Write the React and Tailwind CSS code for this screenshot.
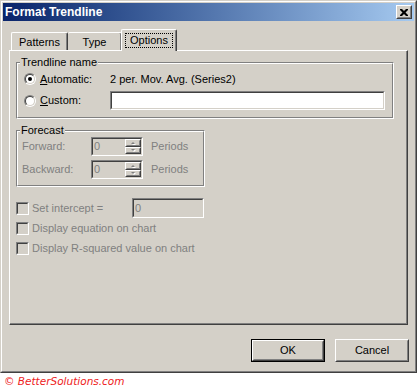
import React from "react";

const FONT = { fontFamily: '"Liberation Sans", Arial, sans-serif' };

function Sunken({ className = "", innerClass = "", children }) {
  return (
    <div className={"border border-t-[#808080] border-l-[#808080] border-b-white border-r-white " + className}>
      <div className={"h-full w-full border border-t-[#404040] border-l-[#404040] border-b-[#d4d0c8] border-r-[#d4d0c8] " + innerClass}>
        {children}
      </div>
    </div>
  );
}

function Raised({ className = "", innerClass = "", children }) {
  return (
    <div className={"border border-t-white border-l-white border-b-[#404040] border-r-[#404040] " + className}>
      <div className={"h-full w-full border border-t-[#d4d0c8] border-l-[#d4d0c8] border-b-[#808080] border-r-[#808080] " + innerClass}>
        {children}
      </div>
    </div>
  );
}

function Group({ className = "", label, children }) {
  return (
    <div className={"relative border border-t-[#808080] border-l-[#808080] border-b-white border-r-white " + className}>
      <div className="h-full w-full border border-t-white border-l-white border-b-[#808080] border-r-[#808080]">
        {children}
      </div>
      <span className="absolute left-[3px] top-[-8px] bg-[#d4d0c8] px-[1px] text-[11px] leading-[14px] text-black">
        {label}
      </span>
    </div>
  );
}

function Radio({ checked }) {
  return (
    <div className="w-[12px] h-[12px] shrink-0 rounded-full border border-t-[#808080] border-l-[#808080] border-b-white border-r-white">
      <div className="w-full h-full rounded-full border border-t-[#404040] border-l-[#404040] border-b-[#d4d0c8] border-r-[#d4d0c8] bg-white flex items-center justify-center">
        {checked && <div className="w-[4px] h-[4px] rounded-full bg-black" />}
      </div>
    </div>
  );
}

function Check() {
  return (
    <Sunken className="w-[13px] h-[13px] shrink-0" innerClass="bg-[#d4d0c8]" />
  );
}

function Arrow({ up }) {
  return (
    <svg width="7" height="5" viewBox="0 0 7 5">
      {up ? (
        <>
          <path d="M2 4 L4 2 L6 4 Z" fill="#ffffff" />
          <path d="M1 3 L3 1 L5 3 Z" fill="#808080" />
        </>
      ) : (
        <>
          <path d="M2 2 L6 2 L4 4 Z" fill="#ffffff" />
          <path d="M1 1 L5 1 L3 3 Z" fill="#808080" />
        </>
      )}
    </svg>
  );
}

function Spin() {
  return (
    <Sunken className="w-[52px] h-[19px]" innerClass="bg-[#d4d0c8] flex">
      <span className="flex-1 pl-[1px] text-[11px] leading-[15px] text-[#808080]">0</span>
      <div className="w-[16px] h-full flex flex-col">
        <Raised className="h-[8px] w-full" innerClass="flex items-center justify-center">
          <Arrow up />
        </Raised>
        <Raised className="h-[7px] w-full" innerClass="flex items-center justify-center">
          <Arrow />
        </Raised>
      </div>
    </Sunken>
  );
}

export default function App() {
  return (
    <div className="w-[417px] h-[389px] bg-white overflow-hidden" style={FONT}>
      <div className="h-[373px] border border-t-[#d4d0c8] border-l-[#d4d0c8] border-b-[#404040] border-r-[#404040]">
        <div className="h-full border border-t-white border-l-white border-b-[#808080] border-r-[#808080] bg-[#d4d0c8] flex flex-col">
          {/* Title bar */}
          <div className="mx-[1px] mt-[1px] h-[18px] flex items-center bg-gradient-to-r from-[#0a246a] to-[#a6caf0]">
            <span className="ml-[2px] text-[12px] font-bold text-white leading-[18px]">Format Trendline</span>
            <div className="flex-1" />
            <Raised className="w-[16px] h-[14px] mr-[2px] bg-[#d4d0c8]" innerClass="flex items-center justify-center">
              <svg width="8" height="7" viewBox="0 0 8 7">
                <path d="M0 0h2l2 2l2-2h2v1l-2.5 2.5l2.5 2.5v1h-2l-2-2l-2 2h-2v-1l2.5-2.5l-2.5-2.5z" fill="#000" />
              </svg>
            </Raised>
          </div>

          {/* Tabs */}
          <div className="mt-[8px] ml-[9px] h-[21px] flex items-end">
            <div className="w-[57px] h-[18px] pt-[1px] rounded-t-[2px] border-l border-t border-white border-r border-r-[#404040] shadow-[inset_-1px_0_#808080] flex items-center justify-center text-[11px] text-black">
              Patterns
            </div>
            <div className="w-[54px] h-[18px] pt-[1px] rounded-t-[2px] border-t border-white border-r border-r-[#404040] shadow-[inset_-1px_0_#808080] flex items-center justify-center text-[11px] text-black">
              Type
            </div>
            <div className="relative top-[1px] ml-[-1px] z-10 w-[56px] h-[22px] rounded-t-[2px] bg-[#d4d0c8] border-l border-t border-white border-r border-r-[#404040] shadow-[inset_-1px_0_#808080] flex items-start justify-center pt-[3px]">
              <span className="border border-dotted border-black px-[4px] text-[11px] leading-[13px] text-black">Options</span>
            </div>
          </div>

          {/* Panel */}
          <div className="ml-[7px] w-[399px] h-[275px] border-l border-t border-white border-r border-b border-r-[#404040] border-b-[#404040] shadow-[inset_-1px_-1px_#808080] flex flex-col text-[11px]">
            <Group className="mt-[11px] ml-[6px] w-[378px] h-[57px]" label="Trendline name">
              <div className="pl-[6px] pt-[8px] flex flex-col">
                <div className="h-[14px] flex items-center">
                  <Radio checked />
                  <span className="ml-[4px] w-[70px] text-black"><u>A</u>utomatic:</span>
                  <span className="text-black">2 per. Mov. Avg. (Series2)</span>
                </div>
                <div className="mt-[5px] h-[19px] flex items-center">
                  <Radio />
                  <span className="ml-[4px] w-[70px] text-black"><u>C</u>ustom:</span>
                  <Sunken className="w-[275px] h-[19px]" innerClass="bg-white" />
                </div>
              </div>
            </Group>

            <Group className="mt-[11px] ml-[6px] w-[189px] h-[57px]" label="Forecast">
              <div className="pl-[4px] pt-[5px] flex flex-col">
                <div className="h-[19px] flex items-center">
                  <span className="w-[69px] text-[#808080]">Forward:</span>
                  <Spin />
                  <span className="ml-[8px] text-[#808080]">Periods</span>
                </div>
                <div className="mt-[4px] h-[19px] flex items-center">
                  <span className="w-[69px] text-[#808080]">Backward:</span>
                  <Spin />
                  <span className="ml-[8px] text-[#808080]">Periods</span>
                </div>
              </div>
            </Group>

            <div className="mt-[11px] ml-[6px] flex flex-col">
              <div className="h-[20px] flex items-center">
                <Check />
                <span className="ml-[3px] w-[100px] text-[#808080]">Set intercept =</span>
                <Sunken className="w-[72px] h-[20px]" innerClass="bg-[#d4d0c8] pl-[1px] text-[#808080] leading-[16px]">
                  0
                </Sunken>
              </div>
              <div className="h-[20px] flex items-center">
                <Check />
                <span className="ml-[3px] text-[#808080]">Display equation on chart</span>
              </div>
              <div className="h-[20px] flex items-center">
                <Check />
                <span className="ml-[3px] text-[#808080]">Display R-squared value on chart</span>
              </div>
            </div>
          </div>

          {/* Buttons */}
          <div className="mt-[14px] pr-[6px] flex justify-end gap-[10px] text-[11px]">
            <div className="w-[74px] h-[23px] border border-black">
              <Raised className="w-full h-full" innerClass="flex items-center justify-center text-black">
                OK
              </Raised>
            </div>
            <Raised className="w-[74px] h-[23px]" innerClass="flex items-center justify-center text-black">
              Cancel
            </Raised>
          </div>
        </div>
      </div>
      <div className="h-[16px] flex items-center pl-[4px]">
        <span className="text-[10.5px] italic text-[#ee2222] leading-[16px]" style={{ fontFamily: '"DejaVu Sans", Verdana, sans-serif' }}>
          © BetterSolutions.com
        </span>
      </div>
    </div>
  );
}
